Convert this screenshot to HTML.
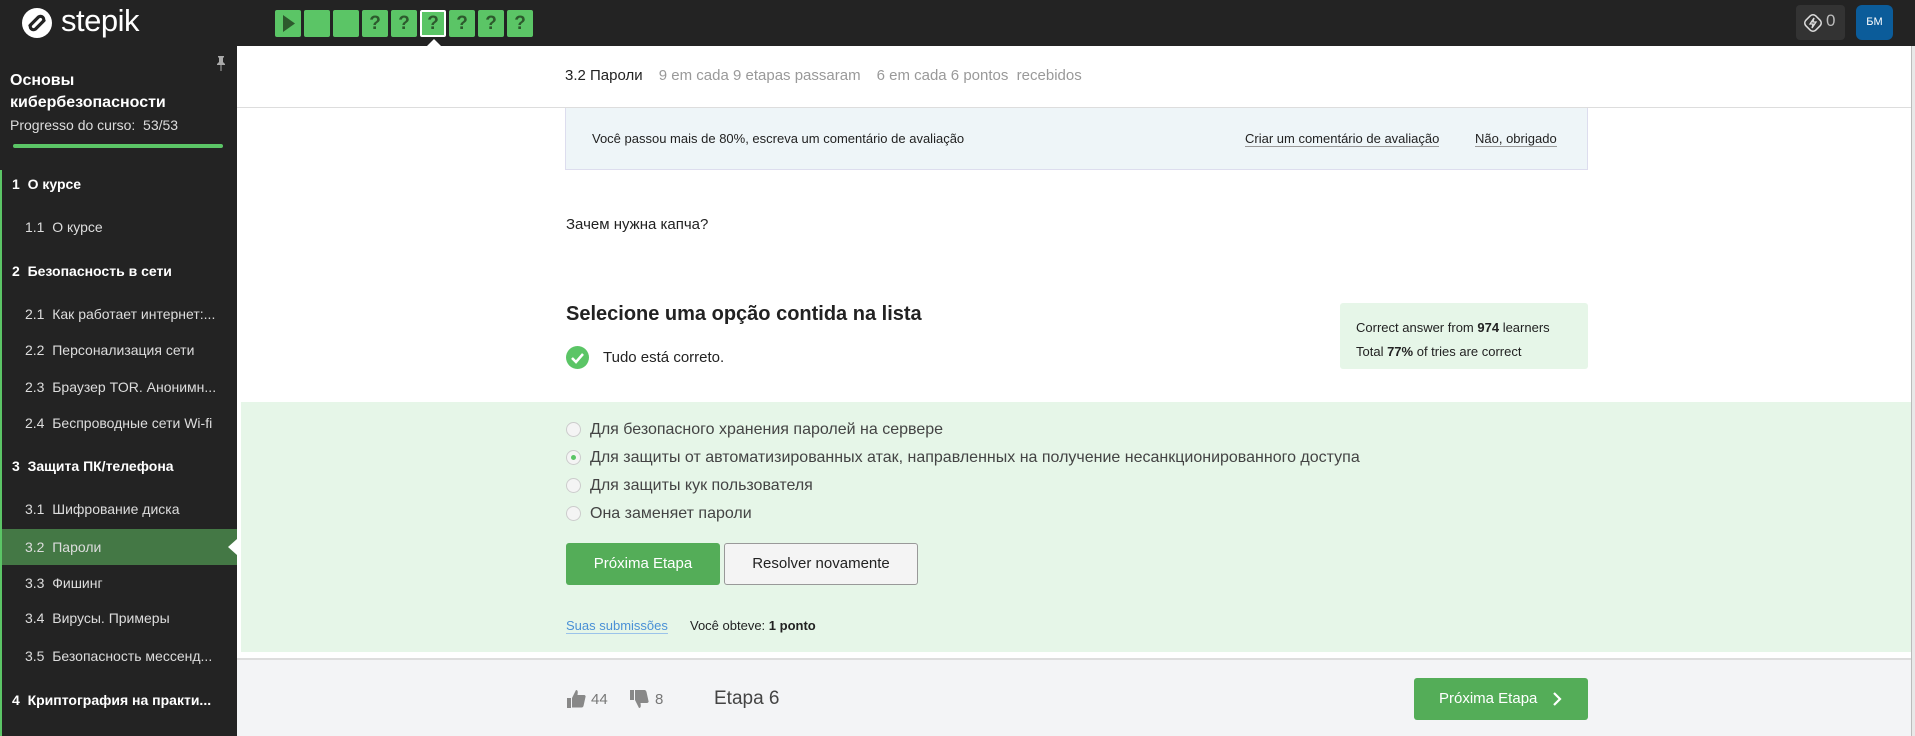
<!DOCTYPE html>
<html><head><meta charset="utf-8"><style>
*{margin:0;padding:0;box-sizing:border-box}
body{width:1915px;height:736px;overflow:hidden;background:#fff;font-family:"Liberation Sans",sans-serif;position:relative;color:#222}
.a{position:absolute;white-space:nowrap}
.hdr{left:0;top:0;width:1915px;height:46px;background:#232323}
.box{top:10px;width:26px;height:27px;background:#5bc566;border-radius:2px;color:#2d5a2d;font-size:19px;font-weight:bold;text-align:center;line-height:27px}
.side{left:0;top:46px;width:237px;height:690px;background:#232323;color:#e8e8e8}
.sec{left:12px;font-size:14px;font-weight:bold;color:#fff}
.it{left:25px;font-size:14px;color:#ddd}
.opt{left:566px;font-size:16px;color:#444}
.rad{position:absolute;left:0;top:1px;width:15px;height:15px;border:1px solid #ccc;border-radius:50%;background:#f4f4f4}
.opt span{margin-left:24px}
</style></head><body>
<div class="a hdr"></div>
<svg class="a" style="left:21px;top:7px" width="32" height="32" viewBox="0 0 32 32"><circle cx="16" cy="16" r="15" fill="#fff"/><path d="M9 18.5l8.5-8.5a3.2 3.2 0 0 1 4.5 4.5l-2.5 2.5M23 13.5l-8.5 8.5a3.2 3.2 0 0 1-4.5-4.5l2.5-2.5" stroke="#232323" stroke-width="3.2" fill="none" stroke-linecap="round"/></svg>
<div class="a" style="left:61px;top:3px;font-size:31px;color:#fff;letter-spacing:-0.5px">stepik</div>
<div class="a box" style="left:275px"><svg width="26" height="27"><path d="M8 5l12 8.5L8 22z" fill="#2d5a2d"/></svg></div>
<div class="a box" style="left:304px"></div>
<div class="a box" style="left:333px"></div>
<div class="a box" style="left:362px">?</div>
<div class="a box" style="left:391px">?</div>
<div class="a box" style="left:420px;border:2px solid #fff;line-height:23px">?</div>
<div class="a box" style="left:449px">?</div>
<div class="a box" style="left:478px">?</div>
<div class="a box" style="left:507px">?</div>
<div class="a" style="left:426px;top:39px;width:0;height:0;border-left:8px solid transparent;border-right:8px solid transparent;border-bottom:8px solid #fff"></div>
<div class="a" style="left:1796px;top:5px;width:49px;height:35px;background:#333;border-radius:4px"></div>
<svg class="a" style="left:1801px;top:11px" width="24" height="24" viewBox="0 0 24 24"><rect x="5" y="5" width="14" height="14" rx="4" transform="rotate(45 12 12)" fill="none" stroke="#ddd" stroke-width="1.5"/><path d="M13 7l-4 6h3l-1 4 4-6h-3z" fill="none" stroke="#ddd" stroke-width="1.3"/></svg>
<div class="a" style="left:1826px;top:11px;font-size:17px;color:#bbb">0</div>
<div class="a" style="left:1856px;top:5px;width:37px;height:35px;background:#0b5c9a;border-radius:6px;color:#fff;font-size:11px;text-align:center;line-height:35px">БМ</div>
<div class="a" style="left:1911px;top:46px;width:4px;height:690px;background:#e8e8e8;border-left:1px solid #bbb"></div>

<div class="a side"></div>
<div class="a" style="left:0;top:170px;width:2px;height:566px;background:#5bc566"></div>
<svg class="a" style="left:215px;top:55px" width="12" height="16" viewBox="0 0 12 16"><path d="M3 1h6v1l-1 1v4l2 2v1H2V9l2-2V3L3 2z" fill="#aaa"/><rect x="5.5" y="10" width="1" height="6" fill="#aaa"/></svg>
<div class="a" style="left:10px;top:70px;font-size:16px;font-weight:bold;color:#fff;line-height:22px">Основы<br>кибербезопасности</div>
<div class="a" style="left:10px;top:117px;font-size:14px;color:#ddd">Progresso do curso:&nbsp; 53/53</div>
<div class="a" style="left:13px;top:144px;width:210px;height:4px;background:#5bc566;border-radius:2px"></div>
<div class="a sec" style="top:176px">1&nbsp; О курсе</div>
<div class="a it" style="top:219px">1.1&nbsp; О курсе</div>
<div class="a sec" style="top:263px">2&nbsp; Безопасность в сети</div>
<div class="a it" style="top:306px">2.1&nbsp; Как работает интернет:...</div>
<div class="a it" style="top:342px">2.2&nbsp; Персонализация сети</div>
<div class="a it" style="top:379px">2.3&nbsp; Браузер TOR. Анонимн...</div>
<div class="a it" style="top:415px">2.4&nbsp; Беспроводные сети Wi-fi</div>
<div class="a sec" style="top:458px">3&nbsp; Защита ПК/телефона</div>
<div class="a it" style="top:501px">3.1&nbsp; Шифрование диска</div>
<div class="a" style="left:2px;top:529px;width:235px;height:36px;background:#447845"></div>
<div class="a" style="left:228px;top:539px;width:0;height:0;border-top:8px solid transparent;border-bottom:8px solid transparent;border-right:9px solid #fff"></div>
<div class="a it" style="top:539px">3.2&nbsp; Пароли</div>
<div class="a it" style="top:575px">3.3&nbsp; Фишинг</div>
<div class="a it" style="top:610px">3.4&nbsp; Вирусы. Примеры</div>
<div class="a it" style="top:648px">3.5&nbsp; Безопасность мессенд...</div>
<div class="a sec" style="top:692px">4&nbsp; Криптография на практи...</div>

<div class="a" style="left:565px;top:67px;font-size:15px;color:#222">3.2 Пароли <span style="color:#999;margin-left:12px">9 em cada 9 etapas passaram</span><span style="color:#999;margin-left:16px">6 em cada 6 pontos&nbsp; recebidos</span></div>
<div class="a" style="left:237px;top:107px;width:1674px;height:1px;background:#ddd"></div>
<div class="a" style="left:565px;top:108px;width:1023px;height:62px;background:#eef5f8;border:1px solid #dde;border-top:none"></div>
<div class="a" style="left:592px;top:131px;font-size:13px;color:#222">Você passou mais de 80%, escreva um comentário de avaliação</div>
<div class="a" style="left:1245px;top:131px;font-size:13px;color:#222;border-bottom:1px solid #999">Criar um comentário de avaliação</div>
<div class="a" style="left:1475px;top:131px;font-size:13px;color:#222;border-bottom:1px solid #999">Não, obrigado</div>
<div class="a" style="left:566px;top:216px;font-size:15px;color:#222">Зачем нужна капча?</div>
<div class="a" style="left:566px;top:303px;font-size:20px;font-weight:bold;color:#222">Selecione uma opção contida na lista</div>
<svg class="a" style="left:566px;top:346px" width="23" height="23" viewBox="0 0 23 23"><circle cx="11.5" cy="11.5" r="11.5" fill="#5bc566"/><path d="M6 12l4 4 7-8" stroke="#fff" stroke-width="2.5" fill="none"/></svg>
<div class="a" style="left:603px;top:349px;font-size:15px;color:#222">Tudo está correto.</div>
<div class="a" style="left:1340px;top:303px;width:248px;height:66px;background:#e6f6e8;border-radius:3px"></div>
<div class="a" style="left:1356px;top:316px;font-size:13px;color:#222;line-height:24px">Correct answer from <b>974</b> learners<br>Total <b>77%</b> of tries are correct</div>
<div class="a" style="left:241px;top:402px;width:1670px;height:250px;background:#e6f6e8"></div>
<div class="a opt" style="top:421px"><i class="rad"></i><span>Для безопасного хранения паролей на сервере</span></div>
<div class="a opt" style="top:449px"><i class="rad"><i style="position:absolute;left:4px;top:4px;width:5px;height:5px;border-radius:50%;background:#5bc566"></i></i><span>Для защиты от автоматизированных атак, направленных на получение несанкционированного доступа</span></div>
<div class="a opt" style="top:477px"><i class="rad"></i><span>Для защиты кук пользователя</span></div>
<div class="a opt" style="top:505px"><i class="rad"></i><span>Она заменяет пароли</span></div>
<div class="a" style="left:566px;top:543px;width:154px;height:42px;background:#54ad58;border-radius:3px;color:#fff;font-size:15px;text-align:center;line-height:42px">Próxima Etapa</div>
<div class="a" style="left:724px;top:543px;width:194px;height:42px;background:#f4f4f4;border:1px solid #999;border-radius:3px;color:#222;font-size:15px;text-align:center;line-height:40px">Resolver novamente</div>
<div class="a" style="left:566px;top:618px;font-size:13px;color:#4a90d6;border-bottom:1px solid #9bc3ea">Suas submissões</div>
<div class="a" style="left:690px;top:618px;font-size:13px;color:#222">Você obteve: <b>1 ponto</b></div>
<div class="a" style="left:237px;top:658px;width:1674px;height:78px;background:#f3f4f6;border-top:2px solid #ddd"></div>
<svg class="a" style="left:566px;top:689px" width="20" height="20" viewBox="0 0 20 20"><path d="M1 9h4v10H1zM6 9l4-8c2 0 2 2 1.5 5H18c1 0 2 1 1.5 2l-2 9c-.3 1-1 1.5-2 1.5H6z" fill="#888"/></svg>
<div class="a" style="left:591px;top:691px;font-size:15px;color:#777">44</div>
<svg class="a" style="left:629px;top:689px" width="20" height="20" viewBox="0 0 20 20"><path d="M1 1h4v10H1zM6 11l4 8c2 0 2-2 1.5-5H18c1 0 2-1 1.5-2l-2-9C17.2 2 16.5 1 15.5 1H6z" fill="#888"/></svg>
<div class="a" style="left:655px;top:691px;font-size:15px;color:#777">8</div>
<div class="a" style="left:714px;top:688px;font-size:19px;color:#444">Etapa 6</div>
<div class="a" style="left:1414px;top:678px;width:174px;height:42px;background:#54ad58;border-radius:3px;color:#fff;font-size:15px;line-height:42px;padding-left:25px">Próxima Etapa<svg style="position:absolute;left:137px;top:14px" width="12" height="14" viewBox="0 0 12 14"><path d="M3 1l6 6-6 6" stroke="#fff" stroke-width="2.2" fill="none"/></svg></div>
</body></html>
